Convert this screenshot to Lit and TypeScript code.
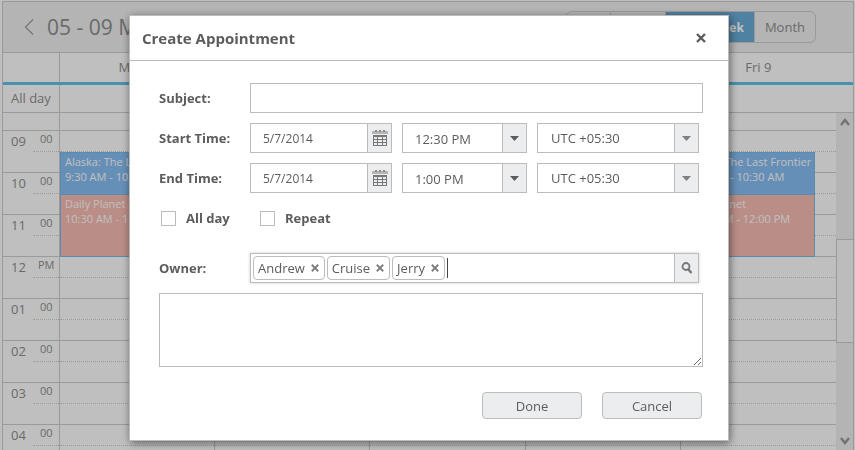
import { LitElement, html, css, svg } from "lit";
import { customElement, state } from "lit/decorators.js";
import { classMap } from "lit/directives/class-map.js";
import { styleMap } from "lit/directives/style-map.js";

const HOUR = 42;
const PARTIAL = 18;
const FIRST_HOUR = 9;

interface Appt {
  day: number;
  title: string;
  range: string;
  from: number;
  to: number;
  tone: string;
}

const DAYS = ["Mon 5", "Tue 6", "Wed 7", "Thu 8", "Fri 9"];
const HOURS: [string, string][] = [
  ["09", "00"], ["10", "00"], ["11", "00"], ["12", "PM"],
  ["01", "00"], ["02", "00"], ["03", "00"], ["04", "00"],
];
const APPTS: Appt[] = [0, 4].flatMap((day) => [
  { day, title: "Alaska: The Last Frontier", range: "9:30 AM - 10:30 AM", from: 9.5, to: 10.5, tone: "blue" },
  { day, title: "Daily Planet", range: "10:30 AM - 12:00 PM", from: 10.5, to: 12, tone: "rose" },
]);

const calendarIcon = html`<svg width="16" height="18" viewBox="0 0 16 18" aria-hidden="true">
  <path d="M0 2H16V5H0Z" fill="#b4b4b4" />
  <path d="M3 1h2v2H3zM7 1h2v2H7zM11 1h2v2h-2z" fill="#8a8a8a" />
  <path d="M1 6H15V8H1Z" fill="#777" />
  <path d="M1 10.500H15M1 13.500H15M1 16.500H15M1.500 7V17M5.500 7V17M10.500 7V17M14.500 7V17" fill="none" stroke="#777" />
</svg>`;
const arrow = (c: string) => html`<svg width="9" height="5" viewBox="0 0 9 5" aria-hidden="true"><path d="M0 0H9L4.500 5Z" fill=${c} /></svg>`;
const cross = (size: number, c: string) => html`<svg width=${size} height=${size} viewBox="0 0 10 10" aria-hidden="true">
  ${svg`<path d="M1 1L9 9M9 1L1 9" fill="none" stroke=${c} stroke-width="2.4" />`}
</svg>`;
const chevron = (d: string) => html`<svg width="10" height="8" viewBox="0 0 10 8" aria-hidden="true"><path d=${d} fill="none" stroke="#999" stroke-width="2.4" /></svg>`;

@customElement("app-root")
export class AppRoot extends LitElement {
  static styles = css`
    :host {
      display: block;
      font-family: "Open Sans", "Noto Sans", sans-serif;
      color: #5c5c5c;
    }
    * { box-sizing: border-box; }
    button, input, select, textarea {
      font: inherit; color: inherit; margin: 0; padding: 0; border: 0;
      border-radius: 0; background: none; min-width: 0; outline: none;
    }
    button { display: grid; place-items: center; }
    svg { display: block; }

    .page { background: #fff; height: 100vh; padding: 1px 1px 0 2px; display: flex; overflow: hidden; }
    .scheduler {
      flex: 1; min-width: 0; display: flex; flex-direction: column;
      border: 1px solid #cecece; border-bottom: 0; color: #8e8e8e;
    }
    .toolbar {
      display: flex; align-items: center; height: 51px; flex: none; padding: 0 37px 0 18px;
      background: #f0f0f0; border-bottom: 1px solid #cecece;
    }
    .prev { width: 16px; height: 20px; }
    .range { margin: 0 auto 0 10px; font-size: 21px; font-weight: 400; line-height: 30px; }
    .views { display: flex; border: 1px solid #cecece; border-radius: 6px; overflow: hidden; height: 32px; }
    .view { font-size: 13px; padding: 0 10px; border-left: 1px solid #cecece; }
    .view:first-child { border-left: 0; }
    .view.on { background: #6aacd8; color: #fff; font-size: 12px; font-weight: 700; }

    .head, .allday, .body { display: grid; grid-template-columns: 57px minmax(0, 1fr) 17px; flex: none; font-size: 13px; }
    .head { height: 32px; border-bottom: 3px solid #61c0eb; line-height: 29px; }
    .allday { height: 28px; border-bottom: 1px solid #cecece; line-height: 27px; }
    .gutter { border-right: 1px solid #cecece; }
    .allday .gutter { padding-left: 8px; }
    .days { display: grid; grid-template-columns: repeat(5, minmax(0, 1fr)); }
    .head .days { text-align: center; }
    .body { flex: 1; min-height: 0; overflow: hidden; grid-template-rows: minmax(0, 1fr); }
    .day { position: relative; border-right: 1px solid #cecece; }
    .day:last-child { border-right: 0; }
    .partial { height: 18px; border-bottom: 1px solid #cecece; }
    .hour { height: 42px; border-bottom: 1px solid #cecece; }
    .half { height: 21px; border-bottom: 1px dotted #cecece; }
    .time { display: grid; grid-template-columns: 30px 1fr; }
    .hh { padding-left: 8px; line-height: 20px; }
    .mm { height: 21px; border-bottom: 1px dotted #cecece; font-size: 11px; line-height: 16px; padding-left: 7px; }
    .mm.pm { padding-left: 5px; }
    .appt {
      position: absolute; left: 0; right: 21px; border: 1px solid #77bce4; padding: 1px 4px;
      font-size: 11px; line-height: 15px; color: #fff; white-space: nowrap; overflow: hidden;
    }
    .blue { background: #89bff4; border-bottom: 0; }
    .rose { background: #f9bdb4; }

    .bar { background: #f0f0f0; display: flex; flex-direction: column; }
    .step { height: 18px; width: 17px; flex: none; }
    .before { flex: 109; }
    .thumb { flex: 102; border: 1px solid #cecece; border-right: 0; background: #fbfbfb; }
    .after { flex: 90; }

    .backdrop {
      position: fixed; inset: 0; background: rgba(0, 0, 0, 0.25);
      display: flex; justify-content: center; align-items: flex-start; padding: 15px 0 0 3px;
    }
    .dialog {
      width: 600px; max-width: 100%; background: #fff; border: 1px solid #bbbcbb;
      box-shadow: 1px 2px 8px rgba(0, 0, 0, 0.5); font-size: 13px;
    }
    .title {
      display: flex; align-items: center; justify-content: space-between; height: 45px;
      padding: 0 22px 0 12px; border-bottom: 1px solid #bbbcbb;
    }
    .title h2 { margin: 0; font-size: 15px; line-height: 22px; font-weight: 700; }
    form { padding: 22px 25px 21px 29px; }
    .row { display: flex; align-items: center; gap: 10px; height: 30px; margin-bottom: 10px; }
    .name { width: 81px; flex: none; font-weight: 700; }
    .box { border: 1px solid #bbbcbb; height: 30px; display: flex; background: #fff; }
    .subject { flex: 1; padding: 0 12px; }
    .date { width: 142px; }
    .clock { width: 125px; }
    .zone { width: 162px; position: relative; }
    .box > .entry { flex: 1; padding: 1px 0 0 12px; }
    .date .entry { font-size: 12px; }
    .box.zone > .entry { appearance: none; padding: 0 0 0 13px; }
    .pick { width: 24px; flex: none; border-left: 1px solid #bbbcbb; background: #ebedee; display: grid; place-items: center; }
    .zone .pick { position: absolute; top: 0; right: 0; bottom: 0; pointer-events: none; }
    .checks { gap: 0; margin: 1px 0 20px 2px; }
    .check { display: flex; align-items: center; gap: 10px; width: 99px; font-weight: 700; line-height: 20px; }
    .check input { appearance: none; width: 15px; height: 15px; border: 1px solid #bbbcbb; background: #fff; }
    .owner { flex: 1; margin-right: 4px; padding-left: 2px; gap: 2px; align-items: center; box-shadow: 0 0 3px rgba(0, 0, 0, 0.2); }
    .chip { display: flex; align-items: center; gap: 6px; height: 24px; padding: 0 5px 0 4px; border: 1px solid #bbbcbb; border-radius: 4px; line-height: 22px; }
    .box.owner > .entry { height: 20px; padding: 0; border-left: 1px solid #444; }
    .owner .pick { align-self: stretch; }
    .notes { display: block; width: 100%; height: 74px; border: 1px solid #bbbcbb; resize: both; }
    .actions { display: flex; justify-content: flex-end; gap: 20px; padding: 25px 1px 0 0; }
    .action { width: 100px; height: 27px; border: 1px solid #bbbcbb; border-radius: 4px; background: #ebedee; }
  `;

  @state() private owners = ["Andrew", "Cruise", "Jerry"];
  @state() private view = "Work Week";

  private timeRow(label: string, id: string, time: string) {
    return html`<div class="row">
      <label class="name" for=${id}>${label}</label>
      <div class="box date">
        <input class="entry" id=${id} value="5/7/2014" />
        <button type="button" class="pick" aria-label="Open calendar">${calendarIcon}</button>
      </div>
      <div class="box clock">
        <input class="entry" aria-label="${label} hour" value=${time} />
        <button type="button" class="pick" aria-label="Open time list">${arrow("#5c5c5c")}</button>
      </div>
      <div class="box zone">
        <select class="entry" aria-label="${label} zone"><option>UTC +05:30</option></select>
        <span class="pick">${arrow("#808080")}</span>
      </div>
    </div>`;
  }

  render() {
    return html`<div class="page">
        <main class="scheduler">
          <div class="toolbar">
            <button class="prev" aria-label="Previous">
              <svg width="10" height="16" viewBox="0 0 10 16" aria-hidden="true"><path d="M9 0.500L1.500 8L9 15.500" fill="none" stroke="#a0a0a0" stroke-width="1.300" /></svg>
            </button>
            <h1 class="range">05 - 09 May 2014</h1>
            <div class="views">
              ${["Day", "Week", "Work Week", "Month"].map((v) => html`<button
                class=${classMap({ view: true, on: v === this.view })}
                @click=${() => (this.view = v)}>${v}</button>`)}
            </div>
          </div>
          <div class="head">
            <div class="gutter"></div>
            <div class="days">${DAYS.map((d) => html`<div>${d}</div>`)}</div>
          </div>
          <div class="allday"><div class="gutter">All day</div></div>
          <div class="body">
            <div class="gutter">
              <div class="partial"></div>
              ${HOURS.map(([h, m]) => html`<div class="hour time">
                <span class="hh">${h}</span><span class=${classMap({ mm: true, pm: m === "PM" })}>${m}</span>
              </div>`)}
            </div>
            <div class="days">
              ${DAYS.map((_, i) => html`<div class="day">
                <div class="partial"></div>
                ${HOURS.map(() => html`<div class="hour"><div class="half"></div></div>`)}
                ${APPTS.filter((a) => a.day === i).map((a) => html`<div
                  class="appt ${a.tone}"
                  style=${styleMap({
                    top: `${PARTIAL + (a.from - FIRST_HOUR) * HOUR}px`,
                    height: `${(a.to - a.from) * HOUR}px`,
                  })}><div>${a.title}</div><div>${a.range}</div></div>`)}
              </div>`)}
            </div>
            <div class="bar">
              <button class="step" aria-label="Scroll up">${chevron("M1 7L5 2L9 7")}</button>
              <div class="before"></div><div class="thumb"></div><div class="after"></div>
              <button class="step" aria-label="Scroll down">${chevron("M1 1L5 6L9 1")}</button>
            </div>
          </div>
        </main>
      </div>
      <div class="backdrop">
        <section class="dialog" role="dialog" aria-labelledby="heading">
          <header class="title">
            <h2 id="heading">Create Appointment</h2>
            <button aria-label="Close">${cross(10, "#5c5c5c")}</button>
          </header>
          <form @submit=${(e: Event) => e.preventDefault()}>
            <div class="row">
              <label class="name" for="subject">Subject:</label>
              <input class="box subject" id="subject" />
            </div>
            ${this.timeRow("Start Time:", "start", "12:30 PM")}
            ${this.timeRow("End Time:", "end", "1:00 PM")}
            <div class="row checks">
              <label class="check"><input type="checkbox" />All day</label>
              <label class="check"><input type="checkbox" />Repeat</label>
            </div>
            <div class="row">
              <label class="name" for="owner">Owner:</label>
              <div class="box owner">
                ${this.owners.map((o) => html`<span class="chip">${o}<button
                  type="button" aria-label="Remove ${o}"
                  @click=${() => (this.owners = this.owners.filter((x) => x !== o))}>${cross(8, "#808080")}</button></span>`)}
                <input class="entry" id="owner" />
                <button type="button" class="pick" aria-label="Search">
                  <svg width="12" height="12" viewBox="0 0 12 12" aria-hidden="true"><circle cx="5" cy="4.500" r="3.500" fill="none" stroke="#777" stroke-width="1.800" /><path d="M7 7L10.500 11" stroke="#777" stroke-width="2.400" /></svg>
                </button>
              </div>
            </div>
            <textarea class="notes" aria-label="Description"></textarea>
            <div class="actions">
              <button class="action">Done</button>
              <button type="button" class="action">Cancel</button>
            </div>
          </form>
        </section>
      </div>`;
  }
}
